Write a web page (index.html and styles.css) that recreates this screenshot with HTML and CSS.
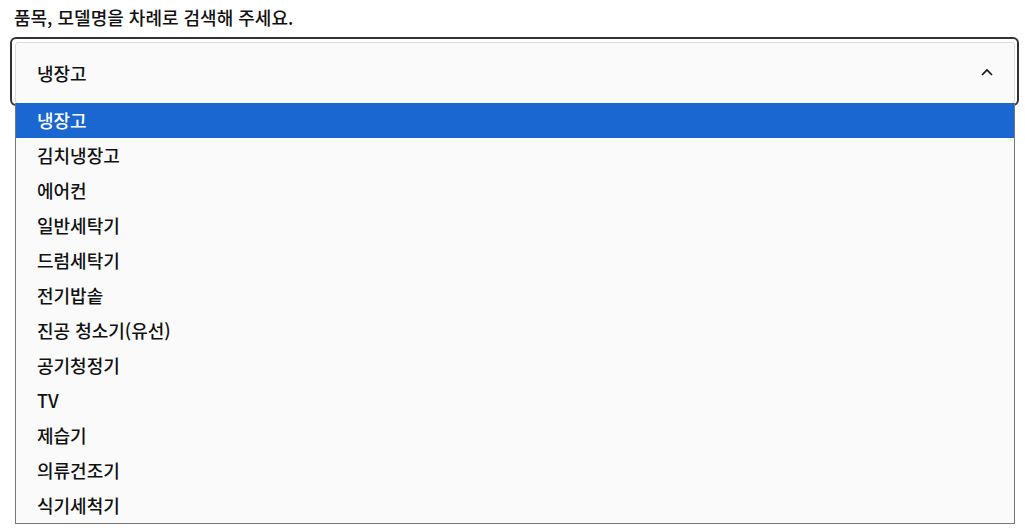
FILE: index.html
```html
<!DOCTYPE html>
<html lang="ko">
<head>
<meta charset="utf-8">
<link rel="stylesheet" href="styles.css">
</head>
<body>
<div class="page">
  <p class="label">품목, 모델명을 차례로 검색해 주세요.</p>
  <div class="field">
    <div class="ring">
      <div class="select">
        <span class="value">냉장고</span>
        <svg class="chev" width="12" height="8" viewBox="0 0 12 8"><path d="M1 7 L6 2 L11 7" fill="none" stroke="#111" stroke-width="1.6"/></svg>
      </div>
    </div>
    <ul class="list">
      <li class="opt active">냉장고</li>
      <li class="opt">김치냉장고</li>
      <li class="opt">에어컨</li>
      <li class="opt">일반세탁기</li>
      <li class="opt">드럼세탁기</li>
      <li class="opt">전기밥솥</li>
      <li class="opt">진공 청소기(유선)</li>
      <li class="opt">공기청정기</li>
      <li class="opt">TV</li>
      <li class="opt">제습기</li>
      <li class="opt">의류건조기</li>
      <li class="opt">식기세척기</li>
    </ul>
  </div>
</div>
</body>
</html>
```

FILE: styles.css
```css
* { box-sizing: border-box; }
html, body { margin: 0; padding: 0; background: #fff; }
body {
  font-family: "Noto Sans CJK KR", "Noto Sans", sans-serif;
  color: #111;
}
.page { padding: 6px 6px 0 10px; }
.label {
  margin: 0 0 8px 4px;
  font-size: 18px;
  line-height: 23px;
  font-weight: 500;
}
.field { display: flex; flex-direction: column; }
.ring {
  border: 2px solid #333;
  border-radius: 6px;
  padding: 3px 2px 1px 3px;
  height: 69px;
}
.select {
  height: 62px;
  background: #fafafa;
  border: 1px solid #dcdcdc;
  border-radius: 3px;
  display: flex;
  align-items: center;
  justify-content: space-between;
  padding: 0 21px 0 21px;
}
.value { font-size: 18px; font-weight: 500; }
.chev { display: block; margin-top: -2px; }
.list {
  position: relative;
  z-index: 1;
  margin: -3px 4px 0 5px;
  padding: 0;
  list-style: none;
  background: #fafafa;
  border: 1px solid #777;
  border-top: none;
}
.opt {
  height: 35px;
  line-height: 35px;
  padding-left: 21px;
  font-size: 18px;
  font-weight: 500;
  color: #111;
}
.opt.active { background: #1a67d2; color: #fff; }
```
